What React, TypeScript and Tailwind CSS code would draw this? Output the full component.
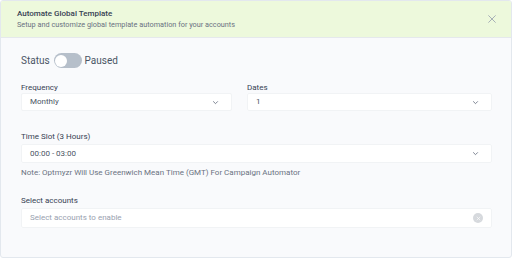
import { useState } from 'react';

function Chevron() {
  return (
    <svg className="w-[7px] h-[7px] text-gray-500" fill="none" stroke="currentColor" viewBox="0 0 24 24">
      <path strokeLinecap="round" strokeLinejoin="round" strokeWidth="3" d="M19 9l-7 7-7-7" />
    </svg>
  );
}

function SelectBox({ value, className = 'h-[18px]' }: { value: string; className?: string }) {
  return (
    <div className={`flex items-center justify-between pl-2 pr-3 bg-white border border-[#f1f3f5] rounded-[2px] ${className}`}>
      <span className="text-[8px] text-gray-600">{value}</span>
      <Chevron />
    </div>
  );
}

export default function App() {
  const [active, setActive] = useState(false);

  return (
    <div className="w-[512px] h-[259px] bg-white" style={{ fontFamily: 'Roboto, "Noto Sans", sans-serif' }}>
      <div className="h-[258px] border border-[#e3e8ee] rounded-[3px] overflow-hidden bg-[#f9fafc] flex flex-col">
        <div className="h-[37px] bg-[#edf9dc] border-b border-[#e5e9ec] flex items-center justify-between pl-4 pr-[14px] shrink-0">
          <div className="flex flex-col">
            <span className="text-[8px] font-medium text-gray-700 leading-[12px]">Automate Global Template</span>
            <span className="text-[7.3px] text-gray-500 leading-[10px]">Setup and customize global template automation for your accounts</span>
          </div>
          <button className="text-gray-400">
            <svg className="w-[10px] h-[10px]" fill="none" stroke="currentColor" viewBox="0 0 24 24">
              <path strokeLinecap="round" strokeWidth="2" d="M4 4l16 16M20 4L4 20" />
            </svg>
          </button>
        </div>

        <div className="pl-5 pr-[19px] pt-[15px]">
          <div className="flex items-center h-[15px]">
            <span className="text-[10px] text-gray-600">Status</span>
            <button
              onClick={() => setActive(!active)}
              className={`ml-1 w-[28px] h-[15px] rounded-full p-[1.5px] flex items-center ${active ? 'bg-green-500 justify-end' : 'bg-[#b6bfca] justify-start'}`}
            >
              <span className="w-[12px] h-[12px] rounded-full bg-white" />
            </button>
            <span className="ml-[3px] text-[10px] text-gray-600">{active ? 'Active' : 'Paused'}</span>
          </div>

          <div className="grid grid-cols-[211px_1fr] gap-[15px] mt-[14px]">
            <div>
              <div className="text-[8px] text-gray-700 leading-[11px]">Frequency</div>
              <SelectBox value="Monthly" />
            </div>
            <div>
              <div className="text-[8px] text-gray-700 leading-[11px]">Dates</div>
              <SelectBox value="1" />
            </div>
          </div>

          <div className="mt-[20px]">
            <div className="text-[8px] text-gray-700 leading-[11px] mb-[2px]">Time Slot (3 Hours)</div>
            <SelectBox value="00:00 - 03:00" className="h-[19px]" />
            <div className="text-[8px] text-gray-500 mt-[5px] leading-[10px]">
              Note: Optmyzr Will Use Greenwich Mean Time (GMT) For Campaign Automator
            </div>
          </div>

          <div className="mt-[17px]">
            <div className="text-[8px] text-gray-700 leading-[11px] mb-[2px]">Select accounts</div>
            <div className="h-[20px] flex items-center justify-between pl-2 pr-[8px] bg-white border border-[#f1f3f5] rounded-[2px]">
              <span className="text-[8px] text-gray-400">Select accounts to enable</span>
              <span className="w-[10px] h-[10px] rounded-full bg-[#d6d9dd] flex items-center justify-center">
                <svg className="w-[5px] h-[5px] text-white" fill="none" stroke="currentColor" viewBox="0 0 24 24">
                  <path strokeLinecap="round" strokeWidth="3" d="M5 5l14 14M19 5L5 19" />
                </svg>
              </span>
            </div>
          </div>
        </div>
      </div>
    </div>
  );
}
